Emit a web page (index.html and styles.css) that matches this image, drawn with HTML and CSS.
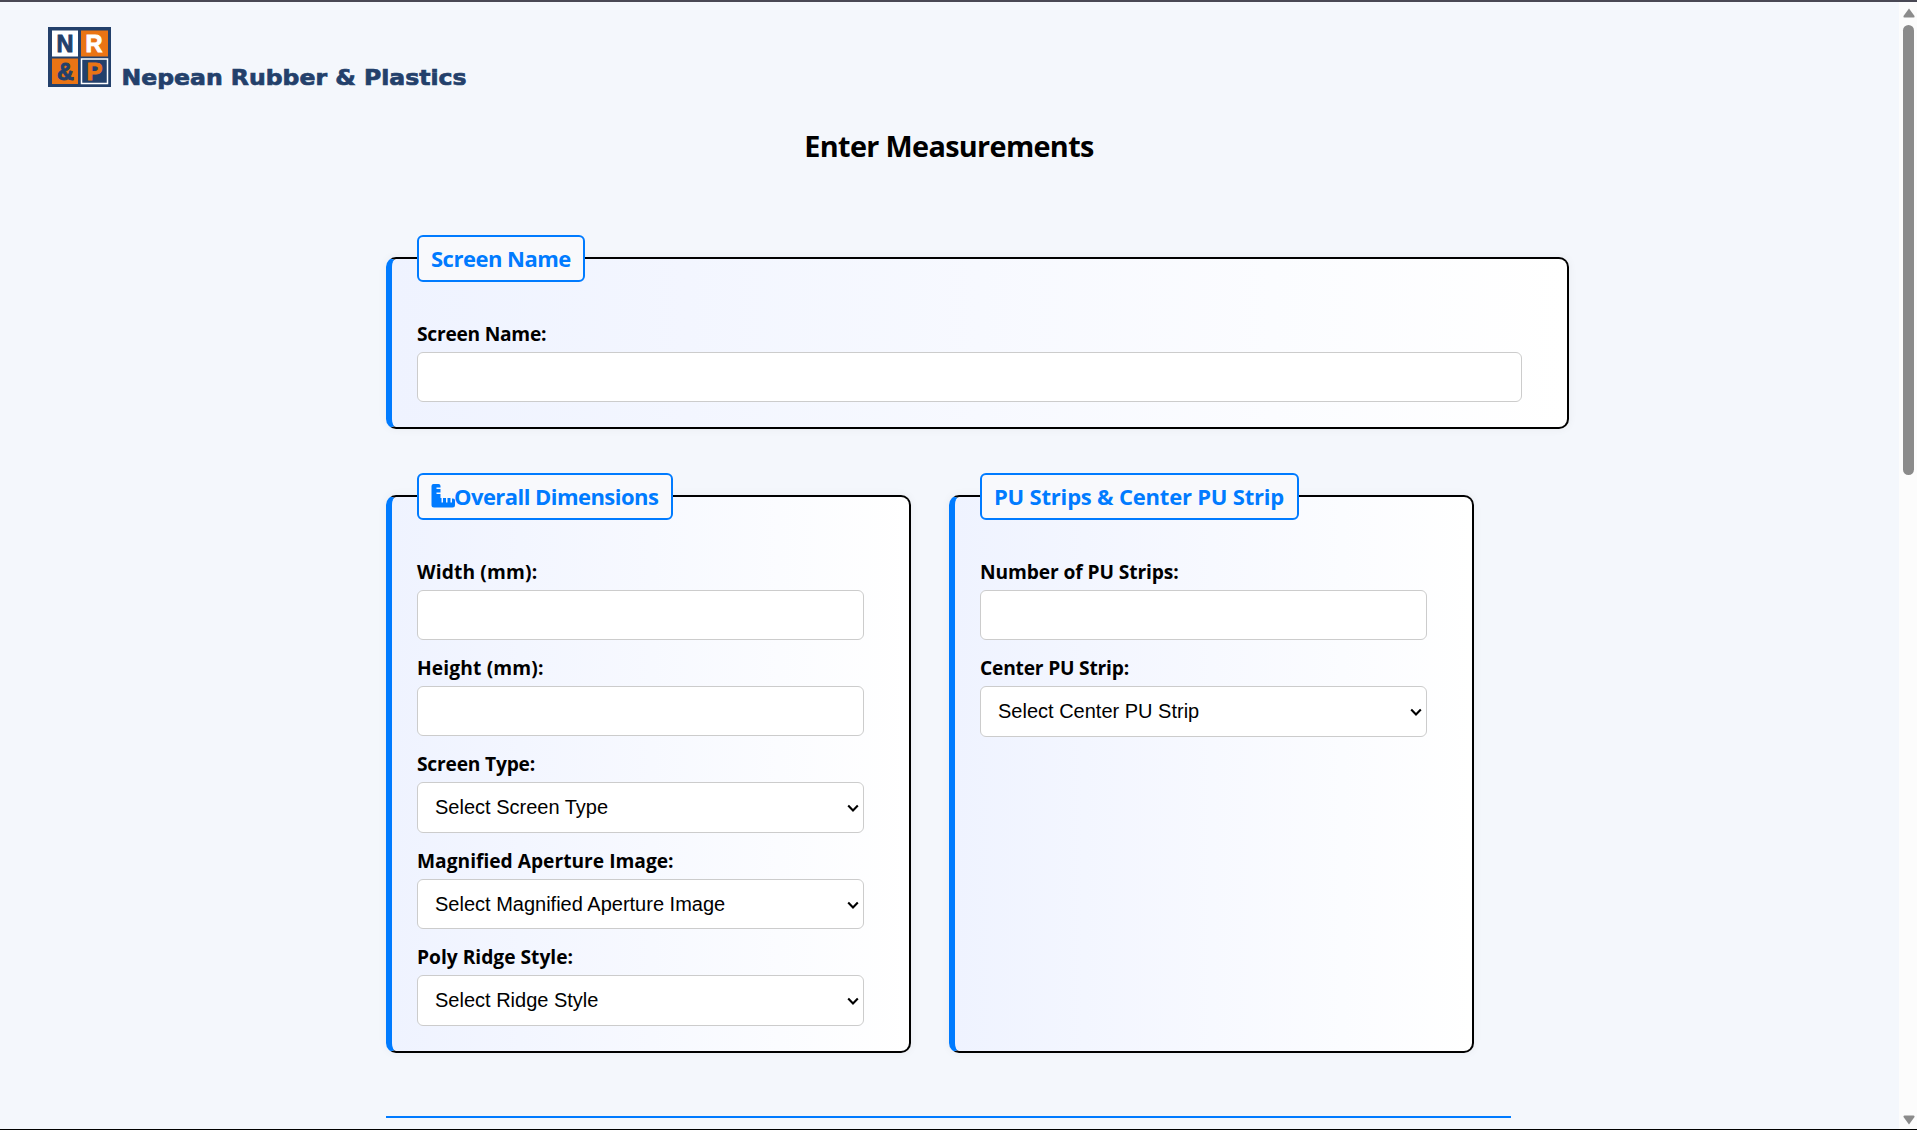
FILE: index.html
```
<!DOCTYPE html>
<html lang="en">
<head>
<meta charset="utf-8">
<title>Enter Measurements</title>
<link rel="stylesheet" href="styles.css">
</head>
<body>
<div class="page">
  <header class="brand">
    <svg class="logo" width="440" height="70" viewBox="0 0 440 70" role="img" aria-label="Nepean Rubber &amp; Plastics">
      <rect width="63" height="60" fill="#23406b"/>
      <rect x="4" y="3.500" width="26" height="26" fill="#fff"/>
      <rect x="33" y="3.500" width="27" height="26" fill="#ea7414"/>
      <rect x="4" y="31.500" width="26" height="25.500" fill="#ea7414"/>
      <rect x="33.500" y="32" width="26" height="24.500" fill="#23406b" stroke="#fff" stroke-width="1.500"/>
      <g class="logo-letter">
        <text x="17" y="25" fill="#23406b" stroke="#23406b">N</text>
        <text x="46" y="25" fill="#fff" stroke="#fff">R</text>
        <text x="17.500" y="53" fill="#23406b" stroke="#23406b">&amp;</text>
        <text x="46.500" y="53" fill="#ea7414" stroke="#ea7414">P</text>
      </g>
      <text class="logo-name" x="73.500" y="58" textLength="345" lengthAdjust="spacingAndGlyphs">Nepean Rubber &amp; Plastics</text>
    </svg>
  </header>
  <h1>Enter Measurements</h1>
  <form class="form">
    <fieldset class="wide">
      <legend class="t-name">Screen Name</legend>
      <div class="field"><label class="l-name" for="name">Screen Name:</label><input id="name" type="text"></div>
    </fieldset>
    <div class="row">
      <fieldset>
        <legend class="t-dims"><svg class="ruler" viewBox="0 0 24 24" width="24" height="24"><path d="M2.500 0H7.500Q9.500 0 9.500 2V3.500H5.500V5H9.500V8.500H5.500V10H9.500V14H10.500V18.500H12V14H15V18.500H16.500V14H19.500V18.500H21V14.500Q24 14 24 16.500V21Q24 23.500 21.500 23.500H3Q.5 23.500 .5 21V2Q.5 0 2.500 0Z" fill="currentColor"/></svg>Overall Dimensions</legend>
        <div class="field"><label class="l-size" for="w">Width (mm):</label><input id="w" type="text"></div>
        <div class="field"><label class="l-size" for="h">Height (mm):</label><input id="h" type="text"></div>
        <div class="field"><label class="l-type" for="type">Screen Type:</label><select id="type"><option>Select Screen Type</option></select></div>
        <div class="field"><label for="aperture">Magnified Aperture Image:</label><select id="aperture"><option>Select Magnified Aperture Image</option></select></div>
        <div class="field"><label for="ridge">Poly Ridge Style:</label><select id="ridge"><option>Select Ridge Style</option></select></div>
      </fieldset>
      <fieldset>
        <legend class="t-strips">PU Strips &amp; Center PU Strip</legend>
        <div class="field"><label class="l-number" for="num">Number of PU Strips:</label><input id="num" type="text"></div>
        <div class="field"><label class="l-type" for="center">Center PU Strip:</label><select id="center"><option>Select Center PU Strip</option></select></div>
      </fieldset>
    </div>
    <hr>
  </form>
</div>
<div class="scrollbar">
  <svg width="14" height="10" viewBox="0 0 14 10"><path d="M7 .5 12.500 8Q13 9.500 11.500 9.500H2.500Q1 9.500 1.500 8Z" fill="#8b8b8b"/></svg>
  <div class="thumb"></div>
  <svg class="down" width="14" height="10" viewBox="0 0 14 10"><path d="M7 9.500 12.500 2Q13 .5 11.500 .5H2.500Q1 .5 1.500 2Z" fill="#8b8b8b"/></svg>
</div>
</body>
</html>
```
FILE: styles.css
```
* { box-sizing: border-box; }
body {
  margin: 0;
  height: 1130px;
  display: flex;
  overflow: hidden;
  background: #f4f7fc;
  border-top: 2px solid #494854;
  border-bottom: 1px solid #000;
  font-family: "Open Sans", "Noto Sans", sans-serif;
  color: #000;
}
.page { flex: 1; min-width: 0; }
.brand { padding: 25px 0 0 48px; height: 118px; }
.logo { display: block; }
.logo-letter {
  font: bold 23.5px "Liberation Sans", sans-serif;
  text-anchor: middle;
  stroke-width: .9;
}
.logo-name {
  font: bold 22px "DejaVu Sans", sans-serif;
  fill: #23406b;
  stroke: #23406b;
  stroke-width: .7;
}
h1 {
  margin: 0;
  height: 115px;
  font-size: 28.8px;
  line-height: 52px;
  letter-spacing: -.65px;
  text-indent: -1px;
  text-align: center;
}
.form { width: 1125px; margin: 0 0 0 386px; }
fieldset {
  margin: 0;
  min-width: 0;
  width: 525px;
  padding: 38.2px 45px 25px 25px;
  border: 2px solid #000;
  border-left: 6px solid #007bff;
  border-radius: 10px;
  background: linear-gradient(to right, #eff3ff, #fff);
  box-shadow: 0 0 10px rgba(0, 0, 0, .05);
}
.wide { width: 1183px; }
legend {
  height: 46.8px;
  margin-left: 0;
  padding: 0 12px;
  border: 2px solid #007bff;
  border-radius: 6px;
  background: #f8f9fc;
  color: #007bff;
  font-size: 22px;
  font-weight: 700;
  line-height: 42.8px;
  white-space: nowrap;
}
.t-name { width: 168px; letter-spacing: -.5px; }
.t-dims { width: 256px; letter-spacing: -.55px; }
.t-strips { width: 319px; letter-spacing: -.2px; }
.ruler { margin-right: -1px; vertical-align: -3px; }
.row { display: flex; gap: 38px; margin-top: 44px; }
.field + .field { margin-top: 14px; }
label {
  display: block;
  height: 27px;
  margin-bottom: 5px;
  font-size: 19.2px;
  font-weight: 700;
  line-height: 27px;
}
.l-name { letter-spacing: -.25px; }
.l-size { letter-spacing: .15px; }
.l-type { letter-spacing: -.2px; }
.l-number { letter-spacing: -.1px; }
input, select {
  display: block;
  width: 100%;
  height: 50px;
  margin: 0;
  padding: 0 14px;
  border: 1px solid #ccc;
  border-radius: 6px;
  background-color: #fff;
  color: #000;
  font: 20px "Liberation Sans", Arial, sans-serif;
}
select {
  height: 50.6px;
  padding: 0 20px 0 17px;
  appearance: none;
  background: #fff url("data:image/svg+xml,%3Csvg xmlns='http://www.w3.org/2000/svg' width='12' height='9' viewBox='0 0 12 9'%3E%3Cpath d='M1.200 1.500 6 6.500 10.800 1.500' fill='none' stroke='%23000' stroke-width='2.100'/%3E%3C/svg%3E") no-repeat right 4px top 21px;
}
.wide input { width: 1105px; }
hr { margin: 63px 0 0; border: 0; height: 2px; background: #007bff; }
.scrollbar {
  width: 18px;
  display: flex;
  flex-direction: column;
  align-items: center;
  padding: 6px 0 4px 1px;
  background: #fcfcfc;
}
.thumb { width: 11px; height: 450px; margin-top: 7px; border-radius: 6px; background: #8b8b8b; }
.down { margin-top: auto; }
```
